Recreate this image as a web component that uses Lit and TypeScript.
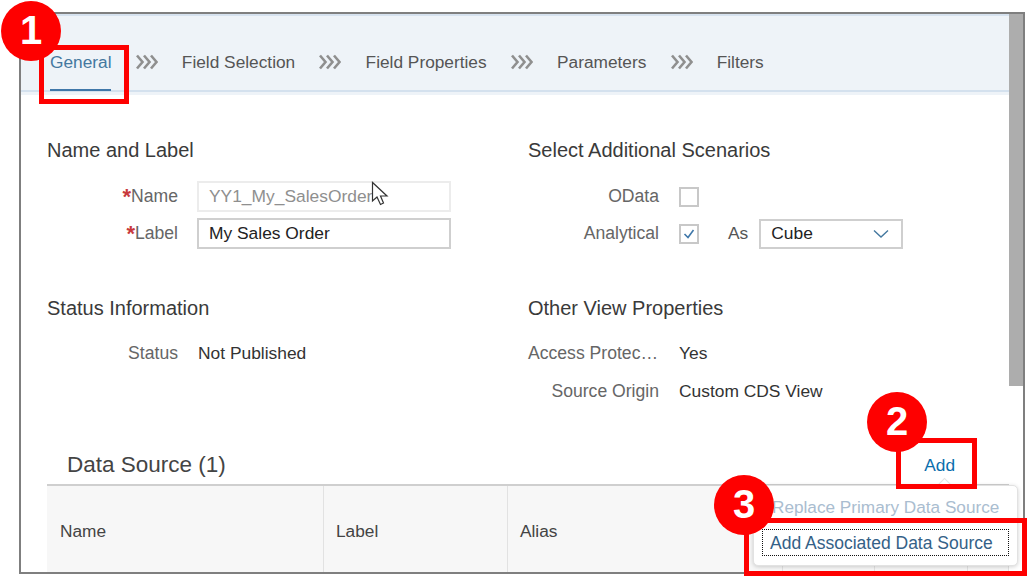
import { LitElement, html, css, svg } from "lit";
import { customElement } from "lit/decorators.js";

const tabs = ["General", "Field Selection", "Field Properties", "Parameters", "Filters"];
const columns = [
  { name: "Name", width: 277 },
  { name: "Label", width: 184 },
  { name: "Alias", width: 275 },
  { name: "", width: 92 },
  { name: "", width: 93 },
  { name: "", width: 41 },
];

const chevrons = html`<svg class="chev" width="22" height="16" viewBox="0 0 22 16">
  ${[1, 8, 15].map(
    (x) => svg`<path d="M${x} 1.5 L${x + 5.5} 8 L${x} 14.5" fill="none" stroke="#8f8f8f" stroke-width="2.6"/>`
  )}
</svg>`;

@customElement("app-root")
export class AppRoot extends LitElement {
  static styles = css`
    :host {
      display: block;
      font-family: "Liberation Sans", Arial, sans-serif;
      color: #333;
    }
    .page {
      position: relative;
      width: 1027px;
      height: 576px;
      overflow: hidden;
      background: #fff;
      padding: 12px 2px 2px 19px;
      box-sizing: border-box;
    }
    .frame {
      position: relative;
      display: flex;
      height: 100%;
      box-sizing: border-box;
      border: 2px solid #7f7f7f;
      overflow: hidden;
    }
    .main {
      width: 988px;
      flex: none;
    }
    .scrollbar {
      width: 15px;
      height: 372px;
      background: #adadad;
    }
    .tabbar {
      display: flex;
      align-items: center;
      gap: 24.2px;
      box-sizing: border-box;
      height: 81px;
      padding: 18px 0 5px 29px;
      background: #eef3f8;
      border-top: 2px solid #d6e2ef;
      position: relative;
      font-size: 17.3px;
      color: #555;
    }
    .tabbar::after {
      content: "";
      position: absolute;
      left: 0;
      right: 0;
      bottom: 3px;
      height: 2px;
      background: #d4e1ee;
    }
    .tab {
      position: relative;
      line-height: 20px;
    }
    .tab.active {
      color: #44789f;
    }
    .tab.active::after {
      content: "";
      position: absolute;
      z-index: 1;
      left: 0;
      right: 0;
      top: 37px;
      height: 2px;
      background: #3f77a9;
    }
    .chev {
      display: block;
    }
    .form {
      display: grid;
      grid-template-columns: 481px 1fr;
      padding: 43px 0 0 26px;
      height: 350px;
      box-sizing: border-box;
    }
    .title {
      font-size: 20px;
      line-height: 24px;
      color: #3a3a3a;
      margin-bottom: 19px;
    }
    .group.low {
      margin-top: 47px;
    }
    .group.low .title {
      margin-bottom: 18px;
    }
    .row {
      display: grid;
      grid-template-columns: 131px auto;
      justify-content: start;
      column-gap: 20px;
      align-items: center;
      height: 31px;
      margin-bottom: 6px;
      font-size: 17.4px;
    }
    .group.low .row {
      margin-bottom: 7px;
    }
    .lbl {
      text-align: right;
      color: #666;
      font-size: 17.6px;
      white-space: nowrap;
    }
    .lbl.cut {
      padding-right: 3px;
    }
    .req {
      color: #c8393c;
      font-size: 22px;
      font-weight: bold;
      line-height: 0;
      vertical-align: -2px;
    }
    .field {
      box-sizing: border-box;
      width: 254px;
      height: 31px;
      margin-left: -1px;
      line-height: 27px;
      padding-left: 10px;
      border: 2px solid #cfcfcf;
      color: #222;
    }
    .field.off {
      border-color: #ececec;
      color: #8f8f8f;
    }
    .check {
      display: flex;
      align-items: center;
      gap: 29px;
      color: #555;
    }
    .box {
      box-sizing: border-box;
      width: 20px;
      height: 20px;
      border: 2px solid #c8c8c8;
      display: flex;
    }
    .select {
      box-sizing: border-box;
      display: flex;
      align-items: center;
      justify-content: space-between;
      width: 144px;
      height: 30px;
      margin-left: -18px;
      padding: 0 12px 0 10px;
      border: 2px solid #cfcfcf;
      color: #222;
    }
    .source-head {
      display: flex;
      justify-content: space-between;
      align-items: center;
      height: 38px;
      margin-top: 1px;
      padding: 0 54px 0 46px;
      font-size: 22.5px;
      color: #444;
    }
    .add {
      font-size: 17.3px;
      color: #0a6ead;
    }
    .table {
      display: flex;
      margin-left: 26px;
      border-top: 2px solid #cfcfcf;
      background: #f7f7f7;
      font-size: 17.3px;
      color: #444;
    }
    .cell {
      box-sizing: border-box;
      height: 90px;
      line-height: 90px;
      padding-left: 12px;
      border-right: 1px solid #e2e2e2;
      flex: none;
    }
    .cell:first-child {
      padding-left: 13px;
    }
    .popover {
      position: absolute;
      left: 732px;
      top: 471px;
      width: 265px;
      height: 81px;
      box-sizing: border-box;
      padding: 6px 8px;
      background: #fff;
      border: 1px solid #e2e2e2;
      border-radius: 5px;
      box-shadow: 0 1px 4px rgba(0, 0, 0, 0.18);
      font-size: 17.2px;
    }
    .popover::before {
      content: "";
      position: absolute;
      left: 185px;
      top: -6px;
      width: 10px;
      height: 10px;
      background: #fff;
      border-left: 1px solid #e2e2e2;
      border-top: 1px solid #e2e2e2;
      transform: rotate(45deg);
    }
    .item {
      height: 30px;
      line-height: 30px;
      padding-left: 10px;
      color: #aabdd0;
      white-space: nowrap;
    }
    .item.focus {
      box-sizing: border-box;
      height: 27px;
      width: 247px;
      margin-top: 7px;
      font-size: 17.5px;
      line-height: 27px;
      padding-left: 7px;
      color: #346187;
      border: 1px dotted #111;
    }
    .mark {
      position: absolute;
      box-sizing: border-box;
      border: 5px solid #fe0000;
    }
    .badge {
      position: absolute;
      width: 60px;
      height: 60px;
      border-radius: 50%;
      background: #fe0000;
      color: #fff;
      font-size: 40px;
      font-weight: bold;
      line-height: 58px;
      text-align: center;
    }
    .cursor {
      position: absolute;
      left: 371px;
      top: 181px;
    }
  `;

  render() {
    return html`
      <div class="page">
        <div class="frame">
          <div class="main">
            <div class="tabbar">
              ${tabs.map(
                (t, i) => html`${i ? chevrons : ""}<span class="tab ${i ? "" : "active"}">${t}</span>`
              )}
            </div>
            <div class="form">
              <div>
                <div class="group">
                  <div class="title">Name and Label</div>
                  <div class="row">
                    <span class="lbl"><span class="req">*</span>Name</span>
                    <div class="field off">YY1_My_SalesOrder</div>
                  </div>
                  <div class="row">
                    <span class="lbl"><span class="req">*</span>Label</span>
                    <div class="field">My Sales Order</div>
                  </div>
                </div>
                <div class="group low">
                  <div class="title">Status Information</div>
                  <div class="row"><span class="lbl">Status</span><span>Not Published</span></div>
                </div>
              </div>
              <div>
                <div class="group">
                  <div class="title">Select Additional Scenarios</div>
                  <div class="row"><span class="lbl">OData</span><div class="box"></div></div>
                  <div class="row">
                    <span class="lbl">Analytical</span>
                    <div class="check">
                      <div class="box">
                        <svg width="16" height="16" viewBox="0 0 16 16">
                          <path d="M3.5 8 L7 11.5 L12.5 4" fill="none" stroke="#3f77a9" stroke-width="1.6" />
                        </svg>
                      </div>
                      <span>As</span>
                      <div class="select">
                        <span>Cube</span>
                        <svg width="16" height="10" viewBox="0 0 16 10">
                          <path d="M1 1.5 L8 8 L15 1.5" fill="none" stroke="#44789f" stroke-width="1.4" />
                        </svg>
                      </div>
                    </div>
                  </div>
                </div>
                <div class="group low">
                  <div class="title">Other View Properties</div>
                  <div class="row"><span class="lbl cut">Access Protec…</span><span>Yes</span></div>
                  <div class="row"><span class="lbl">Source Origin</span><span>Custom CDS View</span></div>
                </div>
              </div>
            </div>
            <div class="source-head"><span>Data Source (1)</span><span class="add">Add</span></div>
            <div class="table">
              ${columns.map(
                (c) => html`<div class="cell" style="width:${c.width}px">${c.name}</div>`
              )}
            </div>
          </div>
          <div class="scrollbar"></div>
          <div class="popover">
            <div class="item">Replace Primary Data Source</div>
            <div class="item focus">Add Associated Data Source</div>
          </div>
        </div>

        <svg class="cursor" width="20" height="26" viewBox="0 0 20 26">
          <path
            d="M1.5 1.5 L1.5 20 L6 16 L9.5 23.5 L12.5 22 L9.5 15 L16 15 Z"
            fill="#fff"
            stroke="#333"
            stroke-width="1.2"
          />
        </svg>

        <div class="mark" style="left:39px;top:45px;width:90px;height:59px"></div>
        <div class="mark" style="left:896px;top:438px;width:81px;height:51px"></div>
        <div class="mark" style="left:744px;top:518px;width:283px;height:58px"></div>
        <div class="badge" style="left:1px;top:1px">1</div>
        <div class="badge" style="left:867px;top:392px">2</div>
        <div class="badge" style="left:714px;top:475px">3</div>
      </div>
    `;
  }
}
